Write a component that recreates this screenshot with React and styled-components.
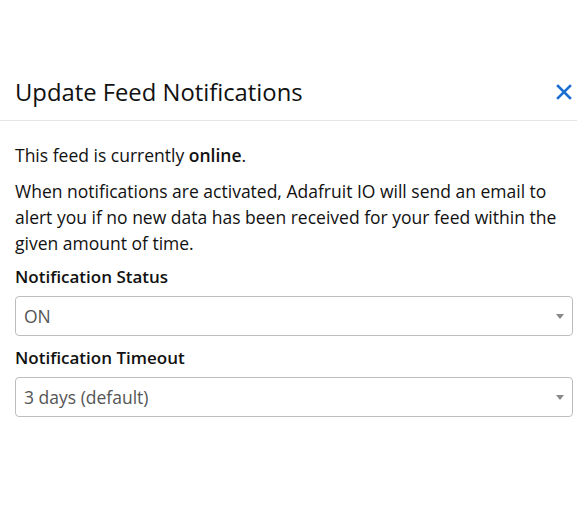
import React from 'react';
import styled, { createGlobalStyle } from 'styled-components';

const GlobalStyle = createGlobalStyle`
  html, body {
    margin: 0;
    padding: 0;
    background: #ffffff;
  }
  body {
    font-family: "Open Sans", "Noto Sans", sans-serif;
    color: #111111;
  }
`;

const Dialog = styled.div`
  width: 577px;
  padding-top: 60px;
  box-sizing: border-box;
`;

const Header = styled.div`
  display: flex;
  align-items: center;
  justify-content: space-between;
  padding: 17px 5px 13px 15px;
  border-bottom: 1px solid #e5e5e5;
`;

const Title = styled.h4`
  margin: 0;
  font-size: 23.8px;
  line-height: 30px;
  font-weight: 500;
  color: #111111;
`;

const CloseButton = styled.button`
  display: flex;
  align-items: center;
  justify-content: center;
  width: 16px;
  height: 24px;
  padding: 0;
  border: none;
  background: transparent;
  cursor: pointer;
`;

const Body = styled.div`
  padding: 21px 4px 15px 15px;
`;

const Text = styled.p`
  margin: 0 0 ${p => p.$tight ? 8 : 10}px 0;
  font-size: 17.5px;
  line-height: 26px;
  color: #111111;
`;

const Strong = styled.strong`
  font-weight: 600;
`;

const Group = styled.div`
  margin-bottom: ${p => p.$last ? 0 : 9}px;
`;

const Label = styled.label`
  display: block;
  margin-bottom: 6px;
  font-size: 17px;
  line-height: 26px;
  font-weight: 600;
  color: #111111;
`;

const SelectBox = styled.div`
  position: relative;
  height: 40px;
  border: 1px solid #bdbdbd;
  border-radius: 4px;
  box-sizing: border-box;
  display: flex;
  align-items: center;
  padding: 0 30px 0 8px;
  font-size: 17.5px;
  color: #555555;
  &::after {
    content: "";
    position: absolute;
    right: 8px;
    top: 50%;
    margin-top: -2px;
    border-left: 4px solid transparent;
    border-right: 4px solid transparent;
    border-top: 5px solid #888888;
  }
`;

const CloseIcon = () => (
  <svg width="16" height="16" viewBox="0 0 16 16">
    <path d="M2 2 L14 14 M14 2 L2 14" stroke="#1a6fcf" strokeWidth="2.6" strokeLinecap="square" />
  </svg>
);

export default function App() {
  return (
    <>
      <GlobalStyle />
      <Dialog>
        <Header>
          <Title>Update Feed Notifications</Title>
          <CloseButton aria-label="Close"><CloseIcon /></CloseButton>
        </Header>
        <Body>
          <Text>This feed is currently <Strong>online</Strong>.</Text>
          <Text $tight>
            When notifications are activated, Adafruit IO will send an email to alert you if no new data has been received for your feed within the given amount of time.
          </Text>
          <Group>
            <Label>Notification Status</Label>
            <SelectBox>ON</SelectBox>
          </Group>
          <Group $last>
            <Label>Notification Timeout</Label>
            <SelectBox>3 days (default)</SelectBox>
          </Group>
        </Body>
      </Dialog>
    </>
  );
}
